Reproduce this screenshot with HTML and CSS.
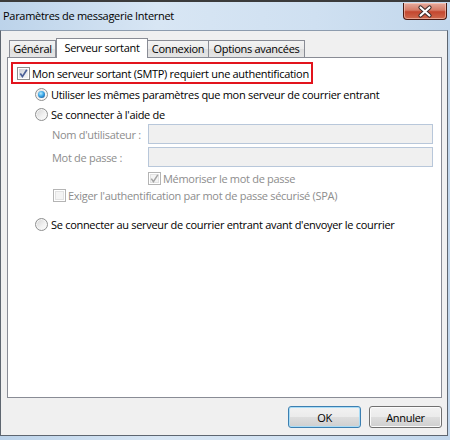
FILE: index.html
```html
<!DOCTYPE html>
<html lang="fr">
<head>
    <meta charset="UTF-8">
    <title>Paramètres de messagerie Internet</title>
    <link rel="stylesheet" href="styles.css">
</head>
<body>
    <div class="window">
        <div class="titlebar">
            <span class="title">Paramètres de messagerie Internet</span>
            <span class="close">
                <svg width="42" height="15" viewBox="0 0 42 15">
                    <path d="M16.5 3.5 L25.5 11.5 M25.5 3.5 L16.5 11.5" stroke="#3a2a28" stroke-width="4.2" stroke-linecap="round"/>
                    <path d="M16.5 3.5 L25.5 11.5 M25.5 3.5 L16.5 11.5" stroke="#ffffff" stroke-width="2.2" stroke-linecap="round"/>
                </svg>
            </span>
        </div>
        <div class="client">
            <div class="tabs">
                <div class="tab tab-general">Général</div>
                <div class="tab tab-outgoing active">Serveur sortant</div>
                <div class="tab tab-connection">Connexion</div>
                <div class="tab tab-advanced">Options avancées</div>
            </div>
            <div class="panel">
                <div class="auth-box">
                    <span class="check checked">
                        <svg width="11" height="11" viewBox="0 0 11 11"><path d="M2.3 5.6 L4.4 8.6 L8.8 1.8" fill="none" stroke="#4a5f97" stroke-width="1.7"/></svg>
                    </span>
                    <span class="label">Mon serveur sortant (SMTP) requiert une authentification</span>
                </div>
                <div class="option">
                    <span class="radio selected"></span>
                    <span class="label">Utiliser les mêmes paramètres que mon serveur de courrier entrant</span>
                </div>
                <div class="option">
                    <span class="radio"></span>
                    <span class="label">Se connecter à l'aide de</span>
                </div>
                <div class="field">
                    <span class="field-label">Nom d'utilisateur :</span>
                    <span class="input"></span>
                </div>
                <div class="field">
                    <span class="field-label">Mot de passe :</span>
                    <span class="input"></span>
                </div>
                <div class="sub-check remember">
                    <span class="check disabled">
                        <svg width="11" height="11" viewBox="0 0 11 11"><path d="M2.3 5.6 L4.4 8.6 L8.8 1.8" fill="none" stroke="#a3a3a3" stroke-width="1.5"/></svg>
                    </span>
                    <span class="label">Mémoriser le mot de passe</span>
                </div>
                <div class="sub-check spa">
                    <span class="check disabled"></span>
                    <span class="label">Exiger l'authentification par mot de passe sécurisé (SPA)</span>
                </div>
                <div class="option last">
                    <span class="radio"></span>
                    <span class="label">Se connecter au serveur de courrier entrant avant d'envoyer le courrier</span>
                </div>
            </div>
            <div class="buttons">
                <button class="btn default">OK</button>
                <button class="btn">Annuler</button>
            </div>
        </div>
    </div>
</body>
</html>
```

FILE: styles.css
```css
* {
    box-sizing: border-box;
}

body {
    margin: 0;
    font-family: "Open Sans", "Noto Sans", sans-serif;
    font-size: 11px;
    letter-spacing: -0.3px;
    color: #000;
}

.window {
    width: 450px;
    height: 440px;
    display: flex;
    flex-direction: column;
    overflow: hidden;
    background: linear-gradient(to right, #bcd3ea, #d8e6f4 35%, #cfe0f1 70%, #c2d7ec);
}

.titlebar {
    height: 30px;
    border-top: 2px solid #3b3b3b;
    display: flex;
    align-items: flex-start;
    padding-left: 3px;
}

.title {
    margin-top: 6px;
    line-height: 15px;
}

.close {
    margin-left: auto;
    margin-right: 3px;
    margin-top: 1px;
    width: 44px;
    height: 17px;
    border: 1px solid #4a1a12;
    border-top: none;
    border-radius: 0 0 4px 4px;
    background: linear-gradient(#e6ab9d, #d57a66 45%, #c4472f 55%, #cf6a4e);
    box-shadow: inset 0 0 0 1px rgba(255, 220, 210, 0.5);
    display: flex;
    align-items: center;
    justify-content: center;
}

.close svg {
    display: block;
}

.client {
    flex: 1;
    margin: 0 2px 4px 0;
    background: #f0f0f0;
    border: 1px solid #5e6670;
    border-top-color: #8d9cae;
}

.tabs {
    display: flex;
    align-items: flex-end;
    height: 20px;
    margin: 7px 0 0 8px;
    position: relative;
    z-index: 1;
}

.tab {
    height: 17px;
    margin-bottom: 1px;
    padding: 0;
    text-align: center;
    white-space: nowrap;
    line-height: 15px;
    border: 1px solid #898c95;
    border-bottom: none;
    border-left: none;
    background: linear-gradient(#f3f3f3, #ebebeb 50%, #dedede 51%, #e5e5e5);
}

.tab-general {
    width: 47px;
    border-left: 1px solid #898c95;
}

.tab-outgoing {
    width: 92px;
}

.tab-connection {
    width: 61px;
}

.tab-advanced {
    width: 96px;
}

.tab.active {
    height: 20px;
    margin-bottom: 0;
    line-height: 17px;
    background: #fff;
    border-left: 1px solid #898c95;
}

.panel {
    margin: -1px 0 0 6px;
    width: 435px;
    height: 341px;
    background: #fff;
    border: 1px solid #898c95;
}

.auth-box {
    margin: 4px 0 0 3px;
    width: 302px;
    height: 22px;
    border: 2px solid #e2141d;
    display: flex;
    align-items: center;
    padding-left: 4px;
    gap: 2px;
}

.check {
    width: 13px;
    height: 13px;
    flex: none;
    border: 1px solid #8e8f8f;
    background: linear-gradient(135deg, #c7ccd3, #eef0f2 70%, #f8f8f8);
    box-shadow: inset 0 0 0 1px #fff;
    display: flex;
    align-items: center;
    justify-content: center;
}

.check svg {
    display: block;
}

.check.disabled {
    border-color: #b4b4b4;
    background: #f4f4f4;
    box-shadow: inset 0 0 0 1px #fff, inset 0 0 0 2px #e2e2e2;
}

.option {
    height: 20px;
    display: flex;
    align-items: center;
    padding-left: 27px;
    gap: 3px;
}

.option.last {
    margin-top: 10px;
}

.radio {
    width: 13px;
    height: 13px;
    flex: none;
    border-radius: 50%;
    border: 1px solid #8e8f8f;
    background: linear-gradient(135deg, #d3d3d3, #f2f2f2 60%, #fdfdfd);
    box-shadow: inset 0 0 0 1px #f6f6f6;
    display: flex;
    align-items: center;
    justify-content: center;
}

.radio.selected::after {
    content: "";
    width: 7px;
    height: 7px;
    border-radius: 50%;
    background: radial-gradient(circle at 40% 35%, #b5ecff, #3aa6e6 45%, #0f3f80);
}

.field {
    height: 20px;
    margin-bottom: 3px;
    display: flex;
    align-items: center;
    padding-left: 44px;
}

.field-label {
    width: 96px;
    color: #8d8d8d;
}

.input {
    width: 285px;
    height: 20px;
    border: 1px solid #b8c7da;
    background: #f0f0f0;
}

.sub-check {
    height: 17px;
    display: flex;
    align-items: center;
    gap: 2px;
    color: #8d8d8d;
}

.remember {
    margin-top: 3px;
    padding-left: 140px;
}

.spa {
    padding-left: 45px;
}

.buttons {
    display: flex;
    justify-content: flex-end;
    gap: 8px;
    margin-top: 8px;
    padding-right: 5px;
}

.btn {
    width: 73px;
    height: 22px;
    padding: 0;
    font: inherit;
    letter-spacing: inherit;
    color: #000;
    border: 1px solid #707070;
    border-radius: 3px;
    background: linear-gradient(#f2f2f2, #ebebeb 48%, #dddddd 52%, #cfcfcf);
    box-shadow: inset 0 0 0 1px #fbfbfb;
}

.btn.default {
    border-color: #3c7fb1;
    box-shadow: inset 0 0 0 1px #a9dcf6;
}
```
